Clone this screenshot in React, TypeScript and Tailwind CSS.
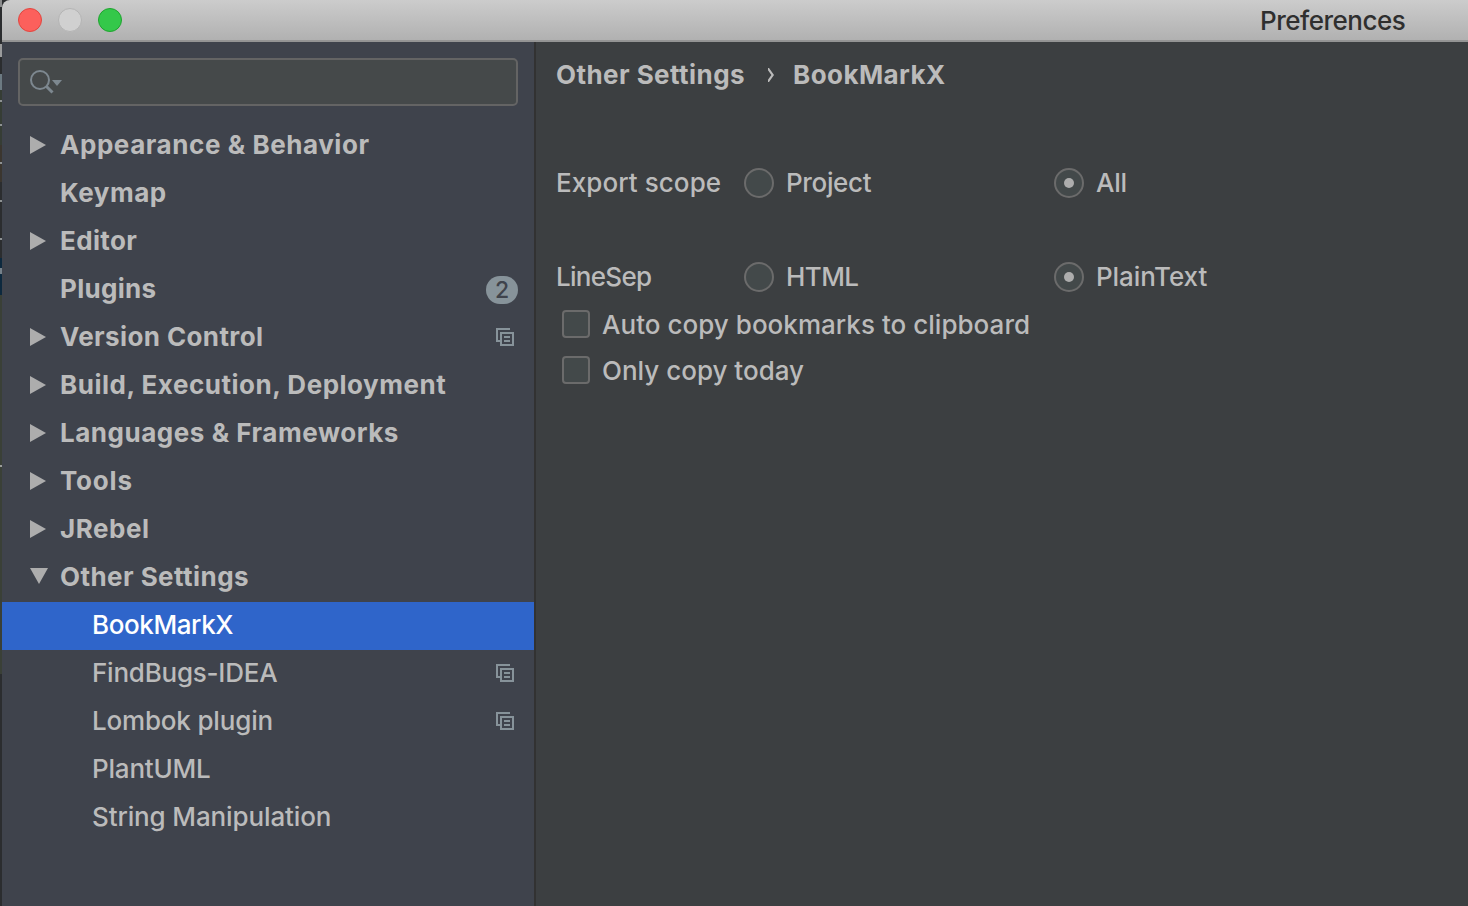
type Node = {
  label: string;
  tracking: string;
  state?: 'closed' | 'open';
  badge?: number;
  copy?: boolean;
};

const groups: Node[] = [
  { label: 'Appearance & Behavior', tracking: 'tracking-[0.56px]', state: 'closed' },
  { label: 'Keymap', tracking: 'tracking-[0.527px]' },
  { label: 'Editor', tracking: 'tracking-[0.35px]', state: 'closed' },
  { label: 'Plugins', tracking: 'tracking-[0.293px]', badge: 2 },
  { label: 'Version Control', tracking: 'tracking-[0.387px]', state: 'closed', copy: true },
  { label: 'Build, Execution, Deployment', tracking: 'tracking-[0.52px]', state: 'closed' },
  { label: 'Languages & Frameworks', tracking: 'tracking-[0.53px]', state: 'closed' },
  { label: 'Tools', tracking: 'tracking-[0.8px]', state: 'closed' },
  { label: 'JRebel', tracking: 'tracking-[0.536px]', state: 'closed' },
  { label: 'Other Settings', tracking: 'tracking-[0.435px]', state: 'open' },
];

const children: (Node & { selected?: boolean })[] = [
  { label: 'BookMarkX', tracking: 'tracking-[-0.4px]', selected: true },
  { label: 'FindBugs-IDEA', tracking: 'tracking-[-0.23px]', copy: true },
  { label: 'Lombok plugin', tracking: 'tracking-[-0.18px]', copy: true },
  { label: 'PlantUML', tracking: 'tracking-[-0.2px]' },
  { label: 'String Manipulation', tracking: 'tracking-[-0.13px]' },
];

function Arrow({ open }: { open: boolean }) {
  return (
    <svg className="block h-6 w-5" viewBox="0 0 20 24" fill="#adadad">
      {open ? <path d="M0 3H18L9 19Z" /> : <path d="M0 3L16 12L0 21Z" />}
    </svg>
  );
}

function CopyIcon() {
  return (
    <svg className="mr-5 block size-[18px] shrink-0" viewBox="0 0 18 18" fill="#87939a" shapeRendering="crispEdges">
      <path d="M0 0H14V2H2V12H4V14H0Z" />
      <path fillRule="evenodd" d="M4 4H18V18H4ZM6 6V16H16V6Z" />
      <path d="M8 8H14V10H8ZM8 12H14V14H8Z" />
    </svg>
  );
}

function Radio({ label, tracking, checked }: { label: string; tracking: string; checked?: boolean }) {
  return (
    <div className="flex items-center gap-3">
      <span className="flex size-[30px] items-center justify-center rounded-full border-2 border-[#6b6b6b] bg-[#43494a]">
        {checked && <span className="size-[10px] rounded-full bg-[#adadad]" />}
      </span>
      <span className={tracking}>{label}</span>
    </div>
  );
}

function Check({ label, tracking }: { label: string; tracking: string }) {
  return (
    <div className="flex h-[46px] items-center gap-3 pl-[26px]">
      <span className="size-7 rounded-[4px] border-2 border-[#6b6b6b] bg-[#43494a]" />
      <span className={`pt-[2px] ${tracking}`}>{label}</span>
    </div>
  );
}

export default function App() {
  return (
    <div className="flex h-[906px] w-[1468px] overflow-hidden bg-[#2b2d2f] font-['Inter',sans-serif] text-[26px] leading-[32px] font-[450] whitespace-nowrap text-[#bbbbbb]">
      <div className="flex w-[2px] shrink-0 flex-col bg-[#2b2d2f]">
        <div className="h-[7px] bg-[#8b8c8d]" />
        <div className="mt-[37px] h-[13px] bg-[#9a9b9c]" />
        <div className="mt-[17px] h-4 bg-[#6c7a82]" />
        <div className="h-[55px] bg-[#363d35]">
          <div className="mt-[10px] h-[2px] bg-[#8e9293]" />
          <div className="mt-[22px] h-[2px] bg-[#8e9293]" />
        </div>
        <div className="h-[37px] bg-[#3b362f]">
          <div className="mt-[17px] h-[2px] bg-[#8e9293]" />
        </div>
        <div className="mt-[18px] h-[2px] bg-[#8e9293]" />
        <div className="mt-[36px] h-[2px] bg-[#8e9293]" />
        <div className="mt-[18px] h-[37px] bg-[#0d293e]">
          <div className="mt-[10px] h-[6px] bg-[#75818a]" />
        </div>
        <div className="h-[170px] bg-[#3a4037]" />
        <div className="h-[2px] bg-[#9b9d9a]" />
        <div className="h-[207px] bg-[#3a4037]" />
      </div>

      <div className="flex min-w-0 flex-1 flex-col">
        <header className="flex h-[42px] shrink-0 items-center rounded-tl-[8px] border-b-2 border-[#949494] bg-linear-to-b from-[#cccccc] to-[#b1b1b1] pl-4">
          <span className="size-6 rounded-full border border-[#e2463f] bg-[#fc605c]" />
          <span className="ml-4 size-6 rounded-full border border-[#b4b4b4] bg-[#d0d0d0]" />
          <span className="ml-4 size-6 rounded-full border border-[#1fa42f] bg-[#34c84a]" />
          <h1 className="ml-[1138px] pt-[2px] font-[450] tracking-[-0.5px] text-[#2f2f2f]">Preferences</h1>
        </header>

        <div className="flex min-h-0 flex-1">
          <aside className="w-[534px] shrink-0 border-r-2 border-[#323232] bg-[#3f434c]">
            <div className="h-20 pt-4 pr-4 pl-4">
              <div className="flex h-12 items-center rounded-[5px] border-2 border-[#646464] bg-[#45494a] pl-[10px]">
                <svg className="block h-[26px] w-8" viewBox="0 0 32 26" fill="none">
                  <circle cx="10" cy="11" r="9" stroke="#7d8890" strokeWidth="2" />
                  <path d="M16.5 17.5L22.5 23.5" stroke="#7d8890" strokeWidth="3" />
                  <path d="M22 11H32L27 17Z" fill="#7d8890" />
                </svg>
              </div>
            </div>

            {groups.map((g) => (
              <div key={g.label} className="flex h-12 items-center pb-[2px] pl-7">
                <div className="w-[30px] shrink-0">{g.state && <Arrow open={g.state === 'open'} />}</div>
                <span className={`flex-1 pb-px font-bold ${g.tracking}`}>{g.label}</span>
                {g.badge && (
                  <span className="mt-[2px] mr-4 flex h-7 w-8 shrink-0 items-center justify-center rounded-full bg-[#87939a] text-[23px] text-[#3f434c]">
                    {g.badge}
                  </span>
                )}
                {g.copy && <CopyIcon />}
              </div>
            ))}
            {children.map((c) => (
              <div
                key={c.label}
                className={`flex h-12 items-center pb-[2px] pl-[90px] ${c.selected ? 'bg-[#2f65ca] text-white' : ''}`}
              >
                <span className={`flex-1 pb-px ${c.tracking}`}>{c.label}</span>
                {c.copy && <CopyIcon />}
              </div>
            ))}
          </aside>

          <main className="min-w-0 flex-1 bg-[#3c3f41]">
            <div className="flex h-[66px] items-center pl-5 font-bold">
              <span className="tracking-[0.435px]">Other Settings</span>
              <svg className="mr-[18px] ml-[22px] block h-[14px] w-2" viewBox="0 0 8 14" fill="#bbbbbb">
                <path d="M1 0H2L7 7L2 14H1V11.8L4.4 7L1 2.2Z" />
              </svg>
              <span className="tracking-[0.429px]">BookMarkX</span>
            </div>
            <div className="mt-[52px] grid h-[46px] grid-cols-[188px_310px_auto] items-center pl-5">
              <span className="tracking-[0.07px]">Export scope</span>
              <Radio label="Project" tracking="tracking-[-0.35px]" />
              <Radio label="All" tracking="tracking-[-0.3px]" checked />
            </div>
            <div className="mt-12 grid h-[46px] grid-cols-[188px_310px_auto] items-center pl-5">
              <span className="tracking-[-0.7px]">LineSep</span>
              <Radio label="HTML" tracking="tracking-[-0.6px]" />
              <Radio label="PlainText" tracking="tracking-[-0.06px]" checked />
            </div>
            <div className="mt-px">
              <Check label="Auto copy bookmarks to clipboard" tracking="tracking-[0.03px]" />
              <Check label="Only copy today" tracking="tracking-[0px]" />
            </div>
          </main>
        </div>
      </div>
    </div>
  );
}
